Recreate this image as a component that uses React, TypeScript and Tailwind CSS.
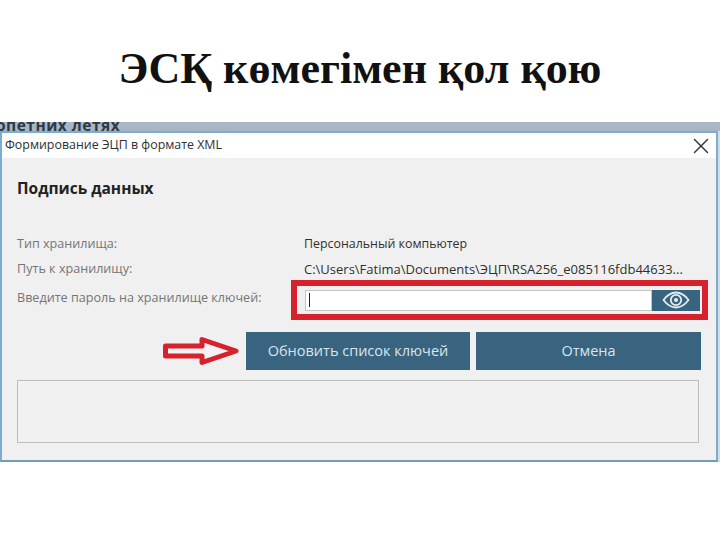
import { X } from "lucide-react"

const bodyFont = "font-['Open_Sans','Noto_Sans',sans-serif]"

function InfoRow({ label, value, valueClass }: { label: string; value: string; valueClass: string }) {
  return (
    <div className="flex h-[25px] items-center">
      <span className="w-[287px] shrink-0 text-[12.6px] text-[#757575]">{label}</span>
      <span className={`whitespace-nowrap text-[#303030] ${valueClass}`}>{value}</span>
    </div>
  )
}

function RedArrow() {
  return (
    <svg width="78" height="30" viewBox="0 0 78 30" className="shrink-0">
      <path
        d="M2.5 10 H39 V3.5 L73 15 L39 26.5 V20 H2.5 Z"
        fill="#f4f2f2"
        stroke="#d6222c"
        strokeWidth="5"
        strokeLinejoin="round"
      />
    </svg>
  )
}

function EyeIcon() {
  return (
    <svg width="28" height="18" viewBox="0 0 28 18" fill="none" stroke="#e6edf1">
      <path d="M1.5 9 C6 3 10 1.5 14 1.5 C18 1.5 22 3 26.5 9 C22 15 18 16.5 14 16.5 C10 16.5 6 15 1.5 9 Z" strokeWidth="1.8" />
      <circle cx="14" cy="9" r="5.2" strokeWidth="1.8" />
      <circle cx="14" cy="9" r="2" fill="#e6edf1" stroke="none" />
    </svg>
  )
}

export default function App() {
  return (
    <div className={`h-[540px] w-[720px] overflow-hidden bg-white ${bodyFont}`}>
      {/* slide title */}
      <h1 className="flex h-[122px] items-center justify-center pt-[15px] font-['Liberation_Serif',serif] text-[44px] font-bold text-[#111111]">
        ЭСҚ көмегімен қол қою
      </h1>

      {/* window behind the dialog */}
      <div className="h-[9px] overflow-hidden bg-[#a9b6c3]">
        <p className="-ml-[4px] -mt-[6px] text-[15.5px] font-bold leading-[18px] tracking-[0.5px] text-[#2c3a48]">опетних летях</p>
      </div>

      <div className="flex">
        {/* dialog */}
        <div className="h-[331px] w-[718px] border-[2px] border-[#7cacce] border-b-[#6f9cbc] bg-[#f0f0f0]">
          <div className="flex h-[25px] items-center justify-between bg-white pl-[3px] pr-[2px]">
            <span className="text-[12.4px] text-[#303030]">Формирование ЭЦП в формате XML</span>
            <X size={26} strokeWidth={1.3} className="text-[#333333]" />
          </div>

          <div className="px-[15px] pt-[20px]">
            <h2 className="text-[15.5px] font-bold leading-[20px] text-[#222222]">Подпись данных</h2>

            <div className="mt-[34px]">
              <InfoRow label="Тип хранилища:" value="Персональный компьютер" valueClass="text-[12.4px]" />
              <InfoRow label="Путь к хранилищу:" value="C:\Users\Fatima\Documents\ЭЦП\RSA256_e085116fdb44633..." valueClass="text-[13px]" />
            </div>

            <div className="mt-[-2px] flex items-center">
              <span className="mb-[4px] w-[274px] shrink-0 text-[12.6px] text-[#757575]">Введите пароль на хранилище ключей:</span>
              <div className="-mr-[7px] flex h-[40px] w-[417px] shrink-0 items-center border-[6px] border-[#d6222c] pl-[8px] pr-[2px]">
                <div className="flex h-[21px] flex-1 items-center border border-[#c4c4c4] bg-white pl-[3px]">
                  <span className="h-[14px] w-px bg-[#222222]" />
                </div>
                <div className="flex h-[21px] w-[48px] items-center justify-center bg-[#386480]">
                  <EyeIcon />
                </div>
              </div>
            </div>

            <div className="mt-[12px] flex items-center pl-[146px]">
              <RedArrow />
              <div className="ml-[5px] flex h-[38px] w-[224px] items-center justify-center bg-[#386480] text-[14.5px] text-[#dbe4ea]">
                Обновить список ключей
              </div>
              <div className="ml-[6px] flex h-[38px] w-[225px] items-center justify-center bg-[#386480] text-[14.5px] text-[#dbe4ea]">
                Отмена
              </div>
            </div>

            <div className="mt-[10px] h-[63px] w-[682px] border border-[#bdbdbd] bg-[#f1f1f1]" />
          </div>
        </div>
        <div className="h-[331px] flex-1 bg-[#d3dde6]" />
      </div>
    </div>
  )
}
